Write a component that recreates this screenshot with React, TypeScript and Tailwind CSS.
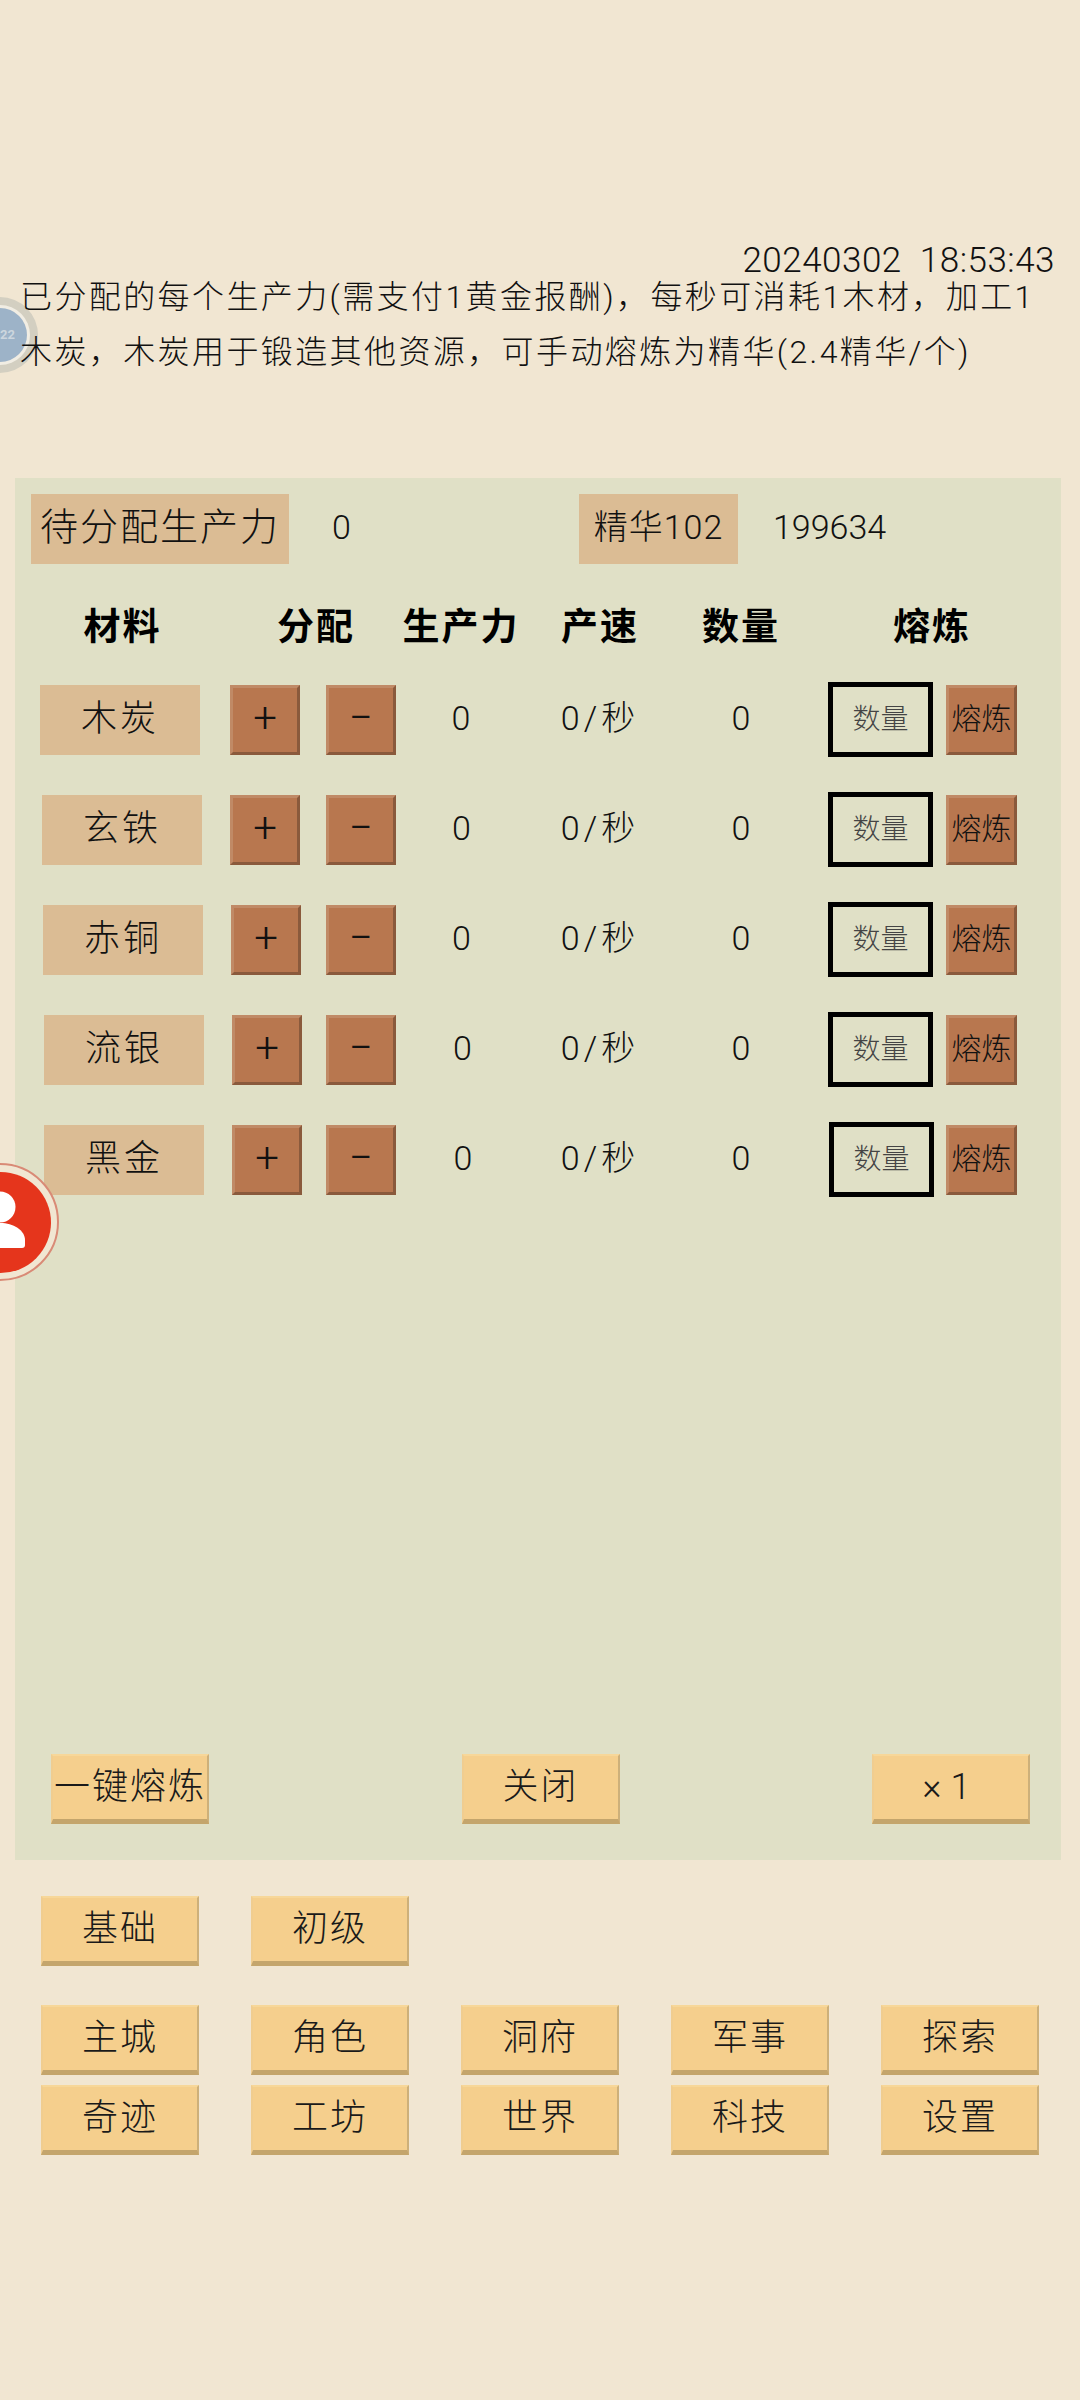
import React from 'react';

const CJK = "font-['Roboto','Noto_Sans_CJK_SC',sans-serif]";

const materials = [
    { name: '木炭', labelClass: 'ml-[25px]', plusClass: 'ml-0', valueClass: 'ml-0', inputClass: 'ml-[20px]', top: 'mt-0' },
    { name: '玄铁', labelClass: 'ml-[27px]', plusClass: 'ml-0', valueClass: 'ml-[1px]', inputClass: 'ml-[20px]', top: 'mt-[40px]' },
    { name: '赤铜', labelClass: 'ml-[28px]', plusClass: 'ml-[1px] mr-[-1px]', valueClass: 'ml-[1px]', inputClass: 'ml-[20px]', top: 'mt-[40px]' },
    { name: '流银', labelClass: 'ml-[29px]', plusClass: 'ml-[2px] mr-[-2px]', valueClass: 'ml-[3px]', inputClass: 'ml-[20px]', top: 'mt-[40px]' },
    { name: '黑金', labelClass: 'ml-[29px]', plusClass: 'ml-[2px] mr-[-2px]', valueClass: 'ml-[4px]', inputClass: 'ml-[21px] mr-[-1px]', top: 'mt-[40px]' },
];

const brownBevel =
    'box-border border-[3px] border-t-[#c08a66] border-l-[#c08a66] border-r-[#8a5a3c] border-b-[#8a5a3c] bg-[#b8774f]';

const rowCols = 'grid-cols-[215px_166px_130px_148px_134px_253px]';

const TanButton = ({ label, className = '' }: { label: string; className?: string }) => (
    <div
        className={`box-border flex h-[70px] w-[158px] items-center justify-center border-x-[2px] border-t-[2px] border-b-[5px] border-l-[#f0cd90] border-r-[#cdb07a] border-t-[#f7d799] border-b-[#c4a56c] bg-[#f5cf8d] pb-[2px] text-[36px] font-light tracking-[2px] text-[#1a1a1a] ${className}`}
    >
        {label}
    </div>
);

const App: React.FC = () => {
    const navTop = ['主城', '角色', '洞府', '军事', '探索'];
    const navBottom = ['奇迹', '工坊', '世界', '科技', '设置'];

    return (
        <div className={`relative h-[2400px] w-[1080px] overflow-hidden bg-[#f1e6d2] text-[#111] ${CJK}`}>
            {/* floating widgets on the left edge */}
            <div className="absolute left-[-38px] top-[297px] flex h-[76px] w-[76px] items-center justify-center rounded-full bg-[#d3cfc1]">
                <div className="flex h-[60px] w-[60px] items-center justify-center rounded-full bg-[#f1ede3]">
                    <div className="flex h-[54px] w-[54px] items-center justify-end rounded-full bg-[#9db3c8] pr-[12px] text-[13px] font-bold text-[#ccd6de]">
                        22
                    </div>
                </div>
            </div>

            <div className="pt-[245px]">
                <div className="flex h-[32px] justify-end whitespace-pre pr-[25px] text-[35px] leading-[32px] font-light tracking-[0.5px]">
                    20240302  18:53:43
                </div>
                <div className="relative z-10 ml-[20px] mt-[-7px] w-[1040px] text-[32px] leading-[55px] font-light tracking-[2.4px]">
                    <div className="h-[55px] whitespace-nowrap">已分配的每个生产力(需支付1黄金报酬)，每秒可消耗1木材，加工1</div>
                    <div className="h-[55px] whitespace-nowrap">木炭，木炭用于锻造其他资源，可手动熔炼为精华(2.4精华/个)</div>
                </div>
            </div>

            <div className="ml-[15px] mt-[98px] flex h-[1382px] w-[1046px] flex-col bg-[#e0e0c6]">
                <div className="flex items-center pt-[16px]">
                    <div className="ml-[16px] flex h-[70px] w-[258px] items-center justify-center bg-[#dbbc94] pb-[3px] text-[38px] font-light tracking-[2px]">
                        待分配生产力
                    </div>
                    <div className="ml-[43px] w-[240px] pb-[3px] text-[34px] font-light">0</div>
                    <div className="ml-[7px] flex h-[70px] w-[159px] items-center justify-center bg-[#dbbc94] pb-[3px] text-[34px] font-light tracking-[1px]">
                        精华102
                    </div>
                    <div className="ml-[35px] pb-[3px] text-[34px] font-light">199634</div>
                </div>

                <div className={`mt-[36px] grid h-[54px] items-center text-center text-[37px] font-bold tracking-[2px] text-black ${rowCols}`}>
                    <div>材料</div>
                    <div className="pl-[6px]">分配</div>
                    <div>生产力</div>
                    <div>产速</div>
                    <div>数量</div>
                    <div className="pr-[5px]">熔炼</div>
                </div>

                <div className="mt-[28px] flex flex-col">
                    {materials.map(m => (
                        <div key={m.name} className={`grid h-[70px] items-center text-center text-[34px] font-light ${rowCols} ${m.top}`}>
                            <div>
                                <div className={`flex h-[70px] w-[160px] items-center justify-center bg-[#dbbc94] pb-[2px] text-[36px] tracking-[3px] ${m.labelClass}`}>
                                    {m.name}
                                </div>
                            </div>
                            <div className="flex text-[42px]">
                                <div className={`flex h-[70px] w-[70px] items-center justify-center pb-[4px] ${brownBevel} ${m.plusClass}`}>+</div>
                                <div className={`ml-[26px] flex h-[70px] w-[70px] items-center justify-center pb-[4px] ${brownBevel}`}>−</div>
                            </div>
                            <div className={`pb-[2px] ${m.valueClass}`}>0</div>
                            <div className="pb-[2px] tracking-[4px]">0/秒</div>
                            <div className="pb-[2px]">0</div>
                            <div className="flex items-center">
                                <div className={`box-border flex h-[75px] w-[105px] items-center justify-center border-[5px] border-black text-[28px] text-[#444] ${m.inputClass}`}>
                                    数量
                                </div>
                                <div className={`ml-[13px] flex h-[70px] w-[71px] items-center justify-center whitespace-nowrap pb-[2px] text-[30px] ${brownBevel}`}>
                                    熔炼
                                </div>
                            </div>
                        </div>
                    ))}
                </div>

                <div className="mt-auto mb-[36px] flex justify-between pl-[36px] pr-[31px]">
                    <TanButton label="一键熔炼" className="whitespace-nowrap" />
                    <TanButton label="关闭" />
                    <TanButton label="×1" className="tracking-[9px]" />
                </div>
            </div>

            <div className="ml-[41px] mt-[36px] flex flex-col">
                <div className="flex gap-[52px]">
                    <TanButton label="基础" />
                    <TanButton label="初级" />
                </div>
                <div className="mt-[39px] flex gap-[52px]">
                    {navTop.map(label => <TanButton key={label} label={label} />)}
                </div>
                <div className="mt-[10px] flex gap-[52px]">
                    {navBottom.map(label => <TanButton key={label} label={label} />)}
                </div>
            </div>

            <div className="absolute left-[-59px] top-[1163px] flex h-[118px] w-[118px] items-center justify-center rounded-full border-2 border-[#d98a76] bg-[#f1e6d2]">
                <div className="h-[101px] w-[101px] overflow-hidden rounded-full bg-[#e5351c]">
                    <svg width="101" height="101" viewBox="0 0 101 101">
                        <circle cx="50" cy="35" r="15.5" fill="#fff" />
                        <path d="M25 76 V66 C25 58 38 51 50.5 51 C63 51 75 58 75 68 V73 Q75 76 72 76 Z" fill="#fff" />
                    </svg>
                </div>
            </div>
        </div>
    );
};

export default App;
